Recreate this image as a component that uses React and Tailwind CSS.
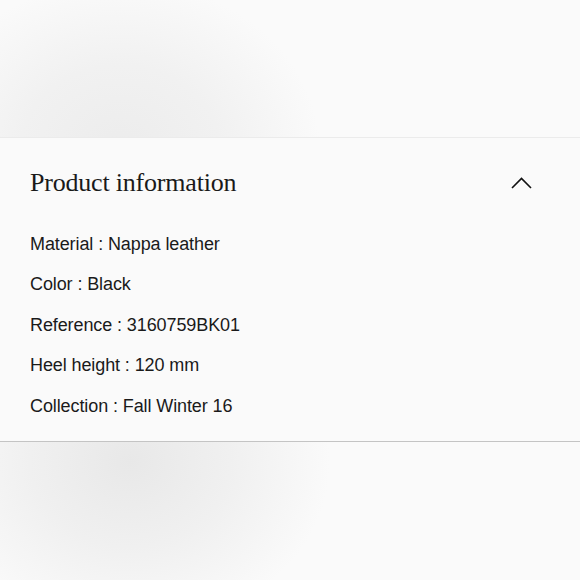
import React from 'react';

const details = [
  ['Material', 'Nappa leather'],
  ['Color', 'Black'],
  ['Reference', '3160759BK01'],
  ['Heel height', '120 mm'],
  ['Collection', 'Fall Winter 16'],
];

export default function App() {
  return (
    <div className="w-[580px] h-[580px] overflow-hidden bg-[#fafafa] flex flex-col">
      {/* Product image placeholder (top) */}
      <div className="h-[138px] shrink-0 bg-[radial-gradient(ellipse_200px_170px_at_120px_150px,#ececec_0%,#f1f1f1_50%,#fafafa_100%)] border-b border-[#ebebeb]" />

      {/* Accordion */}
      <section className="shrink-0 border-b border-[#c4c4c4]">
        <button className="w-full flex items-center justify-between pl-[30px] pr-[48px] h-[86px] pt-[4px]">
          <h2 className="text-[26px] leading-none text-[#1a1a1a] font-['Liberation_Serif',serif] font-normal tracking-[-0.2px]">
            Product information
          </h2>
          <svg width="21" height="12" viewBox="0 0 21 12" fill="none" stroke="#111" strokeWidth="1.6">
            <path d="M1 11 L10.5 1.5 L20 11" />
          </svg>
        </button>
        <ul className="pl-[30px] pb-[14px] font-['Liberation_Sans',Arial,sans-serif] text-[18px] tracking-[-0.1px] text-[#1a1a1a]">
          {details.map(([k, v]) => (
            <li key={k} className="h-[40.5px] flex items-center">
              {k} : {v}
            </li>
          ))}
        </ul>
      </section>

      {/* Product image placeholder (bottom) */}
      <div className="flex-1 bg-[radial-gradient(ellipse_200px_170px_at_130px_20px,#e8e8e8_0%,#f0f0f0_50%,#fafafa_100%)]" />
    </div>
  );
}
